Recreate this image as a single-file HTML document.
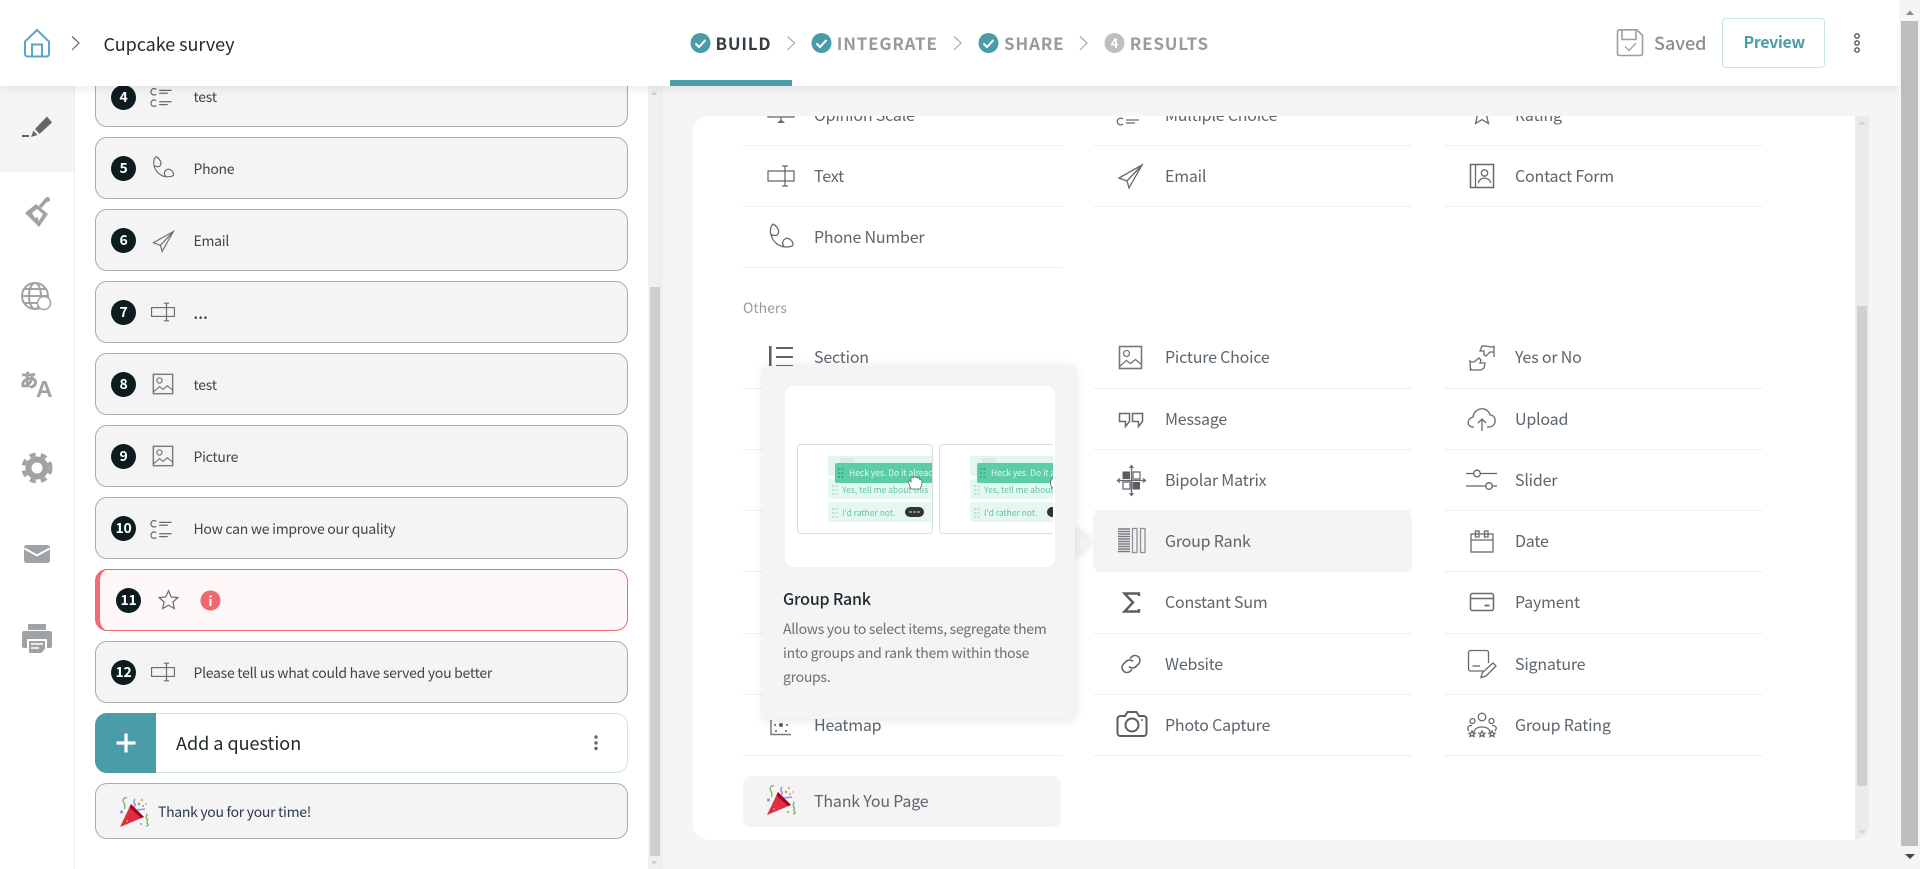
<!DOCTYPE html>
<html><head><meta charset="utf-8"><title>Cupcake survey</title>
<style>
*{box-sizing:border-box}
html,body{margin:0;padding:0;width:1920px;height:869px;overflow:hidden;background:#f5f5f5;font-family:"Noto Sans CJK JP","Liberation Sans",sans-serif}
.a{position:absolute}
.t{position:absolute;white-space:nowrap;line-height:20px;height:20px}
#hdr{left:0;top:0;width:1899px;height:86px;background:#fff;box-shadow:0 2px 10px rgba(0,0,0,.09);z-index:20}
#side{left:0;top:0;width:75px;height:869px;background:#fff;border-right:1px solid #eee;z-index:5}
#list{left:75px;top:0;width:573px;height:869px;background:#fff}
.card{position:absolute;left:95px;width:533px;height:62px;background:#f4f4f4;border:1px solid #a9acb1;border-radius:12px}
.b{position:absolute;width:25px;height:25px;border-radius:50%;background:#0d1c1f;color:#fff;font-size:14px;line-height:25px;text-align:center;font-weight:700;letter-spacing:-.3px}
.q{font-size:14px;color:#3f464c;left:193.5px;letter-spacing:-.27px}
.r{position:absolute;height:1px;width:319px;background:#f0f0f0}
.m{font-size:16px;color:#5d656d;letter-spacing:-.2px;margin-top:-1px}
.st{font-size:17px;font-weight:700;letter-spacing:.8px;color:#979b9e;top:33px}
#panel{left:693px;top:116px;width:1176px;height:724px;background:#fff;border-radius:16px 0 16px 16px;overflow:hidden}
#inner{position:absolute;left:-693px;top:-116px;width:1920px;height:869px}
svg{position:absolute;left:0;top:0;overflow:visible}
.i{fill:none;stroke:#666a6f;stroke-width:1.3}
.pv{font-family:"Noto Sans CJK JP",sans-serif;font-size:8.5px}
</style></head><body>

<svg width="0" height="0" style="position:absolute"><defs>
<g id="i-text" class="i"><rect x="-13" y="-5" width="26" height="10"/><path d="M4-10V10M1-10H7M1 10H7"/></g>
<g id="i-phone" class="i"><path d="M-8-13C-11-10-11-5-10-2C-8 5-2 10 5 10C9 10 12 9 12 8C12 3 7 0 4 2C1 4 1 7 3 9.500M-8-13C-4-11-1-6-3-3C-4-1-7-1-10-2.500"/></g>
<g id="i-mail" class="i"><path d="M12-11L-11 2L-3 5L-1 12ZM-3 5L12-11"/></g>
<g id="i-pic" class="i" style="stroke:#75797e"><rect x="-11" y="-11" width="22" height="22" stroke-width="1.6"/><circle cx="-4" cy="-4" r="3"/><path d="M-11 9L-4 3L0 6L5 2L11 7"/></g>
<g id="i-mc" class="i"><path d="M-7-8A3.4 3.4 0 1 0-7-3M-7 4A3.4 3.4 0 1 0-7 9M-4-7H9M-4-4H5M-4 5H9M-4 8H5"/></g>
<g id="i-star" class="i"><path d="M0-10L3-3.3L10.2-2.6L4.8 2.2L6.4 9.4L0 5.6L-6.4 9.4L-4.8 2.2L-10.2-2.6L-3-3.3Z"/></g>
<g id="party">
<path d="M1 30L12 7L25 20Z" fill="#dd2e44"/><path d="M12 7L25 20L22 21L10.500 10.500Z" fill="#a0041e"/><circle cx="8" cy="24" r="1" fill="#f4900c"/>
<path d="M5 6C3 3 5 0 8 1" fill="none" stroke="#77b255" stroke-width="1.3"/><path d="M5 6C6 8 6 10 5.5 12" fill="none" stroke="#77b255" stroke-width="1.3"/>
<path d="M15 2C17 3 13 5 16 7C17 8 15 9 16 10" fill="none" stroke="#aa8dd8" stroke-width="1.6"/><path d="M18 13L26 12" stroke="#aa8dd8" stroke-width="1.6"/>
<circle cx="2.5" cy="15" r="1.6" fill="#aa8dd8"/><circle cx="23" cy="3" r="1.3" fill="#f4b56a"/><circle cx="27" cy="7" r="1" fill="#f4b56a"/><circle cx="20" cy="7" r="1.2" fill="#77b255"/><circle cx="24" cy="9" r="1" fill="#aa8dd8"/>
<path d="M27 17C30 18 25 20 28 22C30 23 26 25 29 27C30 28 28 29 27 29" fill="none" stroke="#77b255" stroke-width="1.3"/><circle cx="22" cy="27" r="1" fill="#77b255"/>
</g>
<g id="grid"><rect x="0" y="0" width="2" height="2"/><rect x="3.500" y="0" width="2" height="2"/><rect x="0" y="4" width="2" height="2"/><rect x="3.500" y="4" width="2" height="2"/><rect x="0" y="8" width="2" height="2"/><rect x="3.500" y="8" width="2" height="2"/></g>
</defs></svg>

<!-- SIDEBAR -->
<div id="side" class="a">
<div class="a" style="left:0;top:86px;width:74px;height:86px;background:#f5f5f5"></div>
<svg width="75" height="869">
<path d="M47 116.5L52 122.5L39.5 134L35 129Z" fill="#63676c"/><path d="M33.500 130.500L37.500 135L31 137Z" fill="#63676c"/><rect x="22" y="135" width="7" height="2" fill="#63676c"/>
<path d="M25 213L36 204L48 214L39 227Z" fill="#a0a3a6"/><path d="M32 213L37 209L43 214L39 221L37.500 217L35 218Z" fill="#fff"/><path d="M40 207L47 199" stroke="#a0a3a6" stroke-width="3.500"/><circle cx="47.500" cy="199.500" r="2.500" fill="#a0a3a6"/>
<g fill="none" stroke="#a0a3a6" stroke-width="2"><circle cx="35" cy="296" r="13"/><ellipse cx="35" cy="296" rx="6" ry="13"/><path d="M22 296H48M24 289H46M24 303H46"/></g><circle cx="44" cy="303" r="6.500" fill="#fff" stroke="#a0a3a6" stroke-width="1.500"/>
<text x="20" y="387" font-size="18" font-weight="700" fill="#a0a3a6" stroke="#a0a3a6" stroke-width=".7" style="font-family:'Noto Sans CJK JP',sans-serif">あ</text>
<text x="36" y="397" font-size="23" font-weight="700" fill="#a0a3a6" style="font-family:'Liberation Sans',sans-serif">A</text>
<circle cx="37" cy="468" r="11.500" fill="#a0a3a6"/><circle cx="37" cy="468" r="13.500" fill="none" stroke="#a0a3a6" stroke-width="4" stroke-dasharray="6 5.200"/><circle cx="37" cy="468" r="5.500" fill="#fff"/>
<rect x="24" y="545" width="26" height="18" rx="2.500" fill="#a0a3a6"/><path d="M24.500 548.500L37 555.500L49.500 548.500" fill="none" stroke="#fff" stroke-width="2"/>
<rect x="28" y="624" width="18" height="6" fill="#a0a3a6"/><rect x="22" y="631" width="30" height="17" rx="2" fill="#a0a3a6"/><rect x="27" y="639" width="20" height="15" rx="1" fill="#fff"/><path d="M29 641H45V649L41 653H29Z" fill="#a0a3a6"/><path d="M31 644H43M31 648H39" stroke="#fff" stroke-width="1.500"/>
</svg>
</div>

<!-- LIST -->
<div id="list" class="a"></div>
<div class="card" style="top:65px"></div><div class="b" style="left:111px;top:84.500px">4</div><div class="t q" style="top:87px">test</div>
<div class="card" style="top:137px"></div><div class="b" style="left:111px;top:156px">5</div><div class="t q" style="top:159px">Phone</div>
<div class="card" style="top:209px"></div><div class="b" style="left:111px;top:228px">6</div><div class="t q" style="top:231px">Email</div>
<div class="card" style="top:281px"></div><div class="b" style="left:111px;top:300px">7</div><div class="t q" style="top:304px;font-weight:700;letter-spacing:.3px">...</div>
<div class="card" style="top:353px"></div><div class="b" style="left:111px;top:372px">8</div><div class="t q" style="top:375px">test</div>
<div class="card" style="top:425px"></div><div class="b" style="left:111px;top:444px">9</div><div class="t q" style="top:447px">Picture</div>
<div class="card" style="top:497px"></div><div class="b" style="left:111px;top:516px">10</div><div class="t q" style="top:519px">How can we improve our quality</div>
<div class="card" style="top:569px;background:#fdf7f7;border-color:#ec6a72;border-left:5px solid #ef6a73"></div><div class="b" style="left:116px;top:588px">11</div>
<div class="card" style="top:641px"></div><div class="b" style="left:111px;top:660px">12</div><div class="t q" style="top:663px">Please tell us what could have served you better</div>
<div class="a" style="left:95px;top:713px;width:533px;height:60px;background:#fff;border:1px solid #c9e3e6;border-radius:12px"></div>
<div class="a" style="left:95px;top:713px;width:61px;height:60px;background:#4a9ca8;border-radius:12px 0 0 12px"></div>
<div class="t" style="left:176px;top:732px;font-size:18px;color:#20282c;line-height:22px;height:22px">Add a question</div>
<div class="card" style="top:783px;height:56px"></div>
<div class="t" style="left:158px;top:802px;font-size:14px;color:#2b3a4a;letter-spacing:-.3px">Thank you for your time!</div>

<svg width="1920" height="869" style="z-index:2">
<use href="#i-mc" transform="translate(163 97) scale(.95)"/>
<use href="#i-phone" transform="translate(163 168) scale(.88)"/>
<use href="#i-mail" transform="translate(163 241) scale(.87)"/>
<use href="#i-text" transform="translate(163 312) scale(.88)"/>
<use href="#i-pic" transform="translate(163 384) scale(.88)"/>
<use href="#i-pic" transform="translate(163 456) scale(.88)"/>
<use href="#i-mc" transform="translate(163 529) scale(.95)"/>
<use href="#i-star" transform="translate(168.500 600) scale(.92)"/>
<circle cx="210.500" cy="600.500" r="10" fill="#f0676f"/><rect x="209.500" y="599" width="2" height="7" fill="#fff"/><rect x="209.500" y="595.500" width="2" height="2" fill="#fff"/>
<use href="#i-text" transform="translate(163 672) scale(.88)"/>
<path d="M126 733.500V752.500M116.500 743H135.500" stroke="#fff" stroke-width="3.200"/>
<circle cx="596" cy="737" r="1.700" fill="#666"/><circle cx="596" cy="743" r="1.700" fill="#666"/><circle cx="596" cy="748.500" r="1.700" fill="#666"/>
<use href="#party" transform="translate(119 797)"/>
</svg>

<!-- list scrollbar -->
<div class="a" style="left:648px;top:86px;width:12px;height:783px;background:#f0f0f0"></div>
<div class="a" style="left:650px;top:287px;width:10px;height:569px;background:#cfcfcf"></div>
<div class="a" style="left:660px;top:86px;width:3px;height:783px;background:#efefef"></div>
<svg width="1920" height="869" style="z-index:3"><path d="M651 95L654 91L657 95Z" fill="#d0d0d0"/><path d="M651 861L654 865L657 861Z" fill="#d0d0d0"/></svg>

<!-- MAIN PANEL -->
<div id="panel" class="a"><div id="inner">
<div class="r" style="left:743px;top:145px"></div><div class="r" style="left:1093px;top:145px"></div><div class="r" style="left:1444px;top:145px"></div>
<div class="r" style="left:743px;top:206px"></div><div class="r" style="left:1093px;top:206px"></div><div class="r" style="left:1444px;top:206px"></div>
<div class="r" style="left:743px;top:267px"></div>
<div class="r" style="left:743px;top:388px"></div><div class="r" style="left:1093px;top:388px"></div><div class="r" style="left:1444px;top:388px"></div>
<div class="r" style="left:743px;top:449px"></div><div class="r" style="left:1093px;top:449px"></div><div class="r" style="left:1444px;top:449px"></div>
<div class="r" style="left:743px;top:510px"></div><div class="r" style="left:1093px;top:510px"></div><div class="r" style="left:1444px;top:510px"></div>
<div class="r" style="left:743px;top:571px"></div><div class="r" style="left:1444px;top:571px"></div>
<div class="r" style="left:743px;top:633px"></div><div class="r" style="left:1093px;top:633px"></div><div class="r" style="left:1444px;top:633px"></div>
<div class="r" style="left:743px;top:694px"></div><div class="r" style="left:1093px;top:694px"></div><div class="r" style="left:1444px;top:694px"></div>
<div class="r" style="left:743px;top:755px"></div><div class="r" style="left:1093px;top:755px"></div><div class="r" style="left:1444px;top:755px"></div>
<div class="a" style="left:1093px;top:510px;width:319px;height:62px;background:#f4f4f4;border-radius:8px"></div>
<div class="a" style="left:743px;top:776px;width:318px;height:51px;background:#f4f4f4;border-radius:8px"></div>

<div class="t m" style="left:814px;top:105px">Opinion Scale</div><div class="t m" style="left:1165px;top:105px">Multiple Choice</div><div class="t m" style="left:1515px;top:105px">Rating</div>
<div class="t m" style="left:814px;top:166px">Text</div><div class="t m" style="left:1165px;top:166px">Email</div><div class="t m" style="left:1515px;top:166px">Contact Form</div>
<div class="t m" style="left:814px;top:227px">Phone Number</div>
<div class="t" style="left:743px;top:298px;font-size:14px;color:#9a9a9a">Others</div>
<div class="t m" style="left:814px;top:347px">Section</div><div class="t m" style="left:1165px;top:347px">Picture Choice</div><div class="t m" style="left:1515px;top:347px">Yes or No</div>
<div class="t m" style="left:1165px;top:409px">Message</div><div class="t m" style="left:1515px;top:409px">Upload</div>
<div class="t m" style="left:1165px;top:470px">Bipolar Matrix</div><div class="t m" style="left:1515px;top:470px">Slider</div>
<div class="t m" style="left:1165px;top:531px">Group Rank</div><div class="t m" style="left:1515px;top:531px">Date</div>
<div class="t m" style="left:1165px;top:592px">Constant Sum</div><div class="t m" style="left:1515px;top:592px">Payment</div>
<div class="t m" style="left:1165px;top:654px">Website</div><div class="t m" style="left:1515px;top:654px">Signature</div>
<div class="t m" style="left:814px;top:715px">Heatmap</div><div class="t m" style="left:1165px;top:715px">Photo Capture</div><div class="t m" style="left:1515px;top:715px">Group Rating</div>
<div class="t m" style="left:814px;top:791px">Thank You Page</div>

<svg width="1920" height="869">
<g class="i"><rect x="768" y="105" width="26" height="12"/><path d="M781 117V120"/></g><path d="M777 123L781 119.500L785 123Z" fill="#666a6f"/>
<use href="#i-mc" transform="translate(1130 115)"/>
<use href="#i-star" transform="translate(1482 114)"/>
<use href="#i-text" transform="translate(781 176)"/>
<use href="#i-mail" transform="translate(1130 176)"/>
<g class="i"><rect x="1470.500" y="164.500" width="23" height="23" stroke-width="1.500"/><path d="M1475.500 165V187"/><circle cx="1484.500" cy="173" r="3.200"/><path d="M1478.500 183C1479 176.500 1490 176.500 1490.500 183"/></g>
<use href="#i-phone" transform="translate(781 237)"/>

<rect x="769" y="346" width="2.500" height="21" fill="#5a5e63"/><path d="M776 348H793M776 357H793M776 366H793" stroke="#5f6368" stroke-width="2"/>
<use href="#i-pic" transform="translate(1130.500 357.500)"/>
<g class="i"><path d="M1119.500 413.500H1129.500V421.500L1125.500 426.500V421.500H1119.500ZM1132.500 413.500H1142.500V421.500L1138.500 426.500V421.500H1132.500Z" stroke-width="1.500"/></g>
<rect x="1122.500" y="471.500" width="7.500" height="7.500" fill="#5a5e63"/><rect x="1132.500" y="482" width="7.500" height="7.500" fill="#5a5e63"/>
<g class="i"><rect x="1133" y="472" width="7" height="7"/><rect x="1123" y="482" width="7" height="7"/><path d="M1131.500 466V495M1118 480.500H1145M1129.500 468L1131.500 465.500L1133.500 468M1129.500 493L1131.500 495.500L1133.500 493M1120 478.500L1117.500 480.500L1120 482.500M1143 478.500L1145.500 480.500L1143 482.500"/></g>
<path d="M1118 529H1130M1118 531.500H1130M1118 534H1130M1118 536.500H1130M1118 539H1130M1118 541.500H1130M1118 544H1130M1118 546.500H1130M1118 549H1130M1118 551.500H1130" stroke="#777b80" stroke-width="1.400"/>
<g class="i" style="stroke:#8d9196"><rect x="1132.500" y="528.500" width="4.500" height="24"/><rect x="1140.500" y="528.500" width="4.500" height="24"/></g>
<path d="M1139 596V593.500H1124.500L1133 602.500L1124.500 611.500H1139V609" fill="none" stroke="#5a5e63" stroke-width="2.400"/>
<g class="i" style="stroke-width:1.600"><g transform="translate(1131 664)"><path d="M-2 2.500A5 5 0 0 0 5 2.500L8 -.5A5 5 0 0 0 1 -7.500L-1 -5.500"/><path d="M2 -2.500A5 5 0 0 0 -5 -2.500L-8 .5A5 5 0 0 0 -1 7.500L1 5.500"/></g></g>
<g fill="none" stroke="#5a5e63" stroke-width="2"><path d="M1120.500 716H1125L1127.500 712H1136.500L1139 716H1143.500A3 3 0 0 1 1146.500 719V733A3 3 0 0 1 1143.500 736H1120.500A3 3 0 0 1 1117.500 733V719A3 3 0 0 1 1120.500 716Z"/><circle cx="1132" cy="725" r="6.500"/></g><circle cx="1142" cy="720" r="1" fill="#5a5e63"/>

<g class="i"><path d="M1470 360L1470.500 371M1470.500 362H1474L1479 358L1481 360L1480 363H1485L1484 368L1481 370H1473L1470.500 369"/><path d="M1494 345.500V357M1494 347H1491L1486 346H1482L1480 351H1484L1484 355L1486 356L1490 352H1494"/></g>
<g class="i"><path d="M1474 427H1473C1466 427 1467 418 1473 417C1474 408 1487 405 1490 415C1497 415 1497 427 1489 427H1487"/><path d="M1482 431V419M1478 423L1482 419L1486 423"/></g>
<g class="i" style="stroke:#5f6368"><path d="M1466 473.500H1473.500M1480.500 473.500H1497M1466 486H1485.500M1492.500 486H1497"/><circle cx="1477" cy="473.500" r="3.300"/><circle cx="1489" cy="486" r="3.300"/></g>
<g class="i"><rect x="1471" y="534" width="22" height="18"/><path d="M1471 540H1493"/><rect x="1475.500" y="531" width="3.500" height="6"/><rect x="1484.500" y="531" width="3.500" height="6"/></g>
<g class="i" style="stroke-width:1.500"><rect x="1470.500" y="593.500" width="23" height="17" rx="2"/><path d="M1470.500 598.500H1493.500"/><path d="M1484.500 605.500H1489.500" stroke-width="1.800"/></g>
<g class="i"><path d="M1483 671H1470.500A2 2 0 0 1 1468.500 669V652.500A2 2 0 0 1 1470.500 650.500H1486.500A2 2 0 0 1 1488.500 652.500V663"/><path d="M1472.500 666H1480"/><path d="M1493 663L1496 666L1486 676L1481 677.500L1482.500 672.500Z"/></g>
<g class="i"><circle cx="1482" cy="717" r="3.800"/><circle cx="1472.500" cy="721" r="2.500"/><circle cx="1491.500" cy="721" r="2.500"/><path d="M1474 733C1473 725 1491 725 1490 733M1469 731C1466 727 1469 725.500 1472 725.500M1495 731C1498 727 1495 725.500 1492 725.500"/>
<path d="M1472 731L1473 733L1475 733.300L1473.500 734.500L1474 736.500L1472 735.500L1470 736.500L1470.500 734.500L1469 733.300L1471 733ZM1482 731L1483 733L1485 733.300L1483.500 734.500L1484 736.500L1482 735.500L1480 736.500L1480.500 734.500L1479 733.300L1481 733ZM1492 731L1493 733L1495 733.300L1493.500 734.500L1494 736.500L1492 735.500L1490 736.500L1490.500 734.500L1489 733.300L1491 733Z"/></g>
<path d="M771 720V734.500H791" fill="none" stroke="#777b80" stroke-width="1.500"/><circle cx="781" cy="725" r="2" fill="#5a5e63"/><circle cx="775" cy="725" r="1" fill="#5a5e63"/><circle cx="787" cy="725" r="1" fill="#5a5e63"/><circle cx="776" cy="731" r="1" fill="#5a5e63"/><circle cx="786" cy="731" r="1" fill="#5a5e63"/>
<use href="#party" transform="translate(766 785)"/>
</svg>

<div class="a" style="left:1855px;top:116px;width:14px;height:724px;background:#ebebeb"></div>
<div class="a" style="left:1857px;top:306px;width:10px;height:480px;background:#d0d0d0"></div>
<svg width="1920" height="869"><path d="M1858 125L1862 121L1866 125Z" fill="#d6d6d6"/><path d="M1858 830L1862 834L1866 830Z" fill="#d6d6d6"/></svg>
</div></div>

<!-- POPOVER -->
<div class="a" style="left:1065px;top:532px;width:20px;height:20px;background:#f4f4f4;transform:rotate(45deg);box-shadow:2px -2px 8px rgba(0,0,0,.12);z-index:6"></div>
<div class="a" style="left:763px;top:366px;width:312px;height:353px;background:#f4f4f4;border-radius:4px;box-shadow:0 1px 10px rgba(0,0,0,.12);z-index:7">
<div class="a" style="left:22px;top:20px;width:270px;height:181px;background:#fff;border-radius:8px"></div>
</div>
<div class="a pv" style="left:785px;top:386px;width:268px;height:181px;overflow:hidden;z-index:8">
 <div class="a" style="left:12px;top:58px;width:136px;height:90px;background:#fff;border:1px solid #dcdcdc;border-radius:4px;overflow:hidden">
  <div class="a" style="left:30px;top:11px;width:110px;height:20px;background:#e3f5ef;border-radius:2px"></div>
  <div class="a" style="left:42px;top:13px;width:14px;height:6px;background:#d2efe5;border-radius:2px"></div>
  <div class="a" style="left:30px;top:34px;width:110px;height:20px;background:#e6f7f2;border-radius:2px"></div>
  <div class="t" style="left:44px;top:35px;color:#57c9a2">Yes, tell me about this</div>
  <div class="a" style="left:30px;top:57px;width:110px;height:20px;background:#e6f7f2;border-radius:2px"></div>
  <div class="t" style="left:44px;top:58px;color:#57c9a2">I'd rather not.</div>
  <div class="a" style="left:107px;top:62px;width:19px;height:10px;background:#333;border-radius:5px"></div>
  <div class="a" style="left:37px;top:18px;width:110px;height:20px;background:#5ccda6;border-radius:2px"></div>
  <div class="t" style="left:51px;top:18px;color:#e6f7f2">Heck yes. Do it already</div>
 </div>
 <div class="a" style="left:154px;top:58px;width:136px;height:90px;background:#fff;border:1px solid #dcdcdc;border-radius:4px;overflow:hidden">
  <div class="a" style="left:30px;top:11px;width:110px;height:20px;background:#e3f5ef;border-radius:2px"></div>
  <div class="a" style="left:42px;top:13px;width:14px;height:6px;background:#d2efe5;border-radius:2px"></div>
  <div class="a" style="left:30px;top:34px;width:110px;height:20px;background:#e6f7f2;border-radius:2px"></div>
  <div class="t" style="left:44px;top:35px;color:#57c9a2">Yes, tell me about this</div>
  <div class="a" style="left:30px;top:57px;width:110px;height:20px;background:#e6f7f2;border-radius:2px"></div>
  <div class="t" style="left:44px;top:58px;color:#57c9a2">I'd rather not.</div>
  <div class="a" style="left:107px;top:62px;width:19px;height:10px;background:#333;border-radius:5px"></div>
  <div class="a" style="left:37px;top:18px;width:110px;height:20px;background:#5ccda6;border-radius:2px"></div>
  <div class="t" style="left:51px;top:18px;color:#e6f7f2">Heck yes. Do it already</div>
 </div>
 <svg width="268" height="181">
  <use href="#grid" fill="#3fae88" x="53" y="82"/><use href="#grid" fill="#3fae88" x="195" y="82"/>
  <use href="#grid" fill="#b5e6d5" x="47" y="99"/><use href="#grid" fill="#b5e6d5" x="47" y="122"/>
  <use href="#grid" fill="#b5e6d5" x="189" y="99"/><use href="#grid" fill="#b5e6d5" x="189" y="122"/>
  <path d="M124 126H127M128 126H131M132 126H135" stroke="#888" stroke-width="2"/>
  <path d="M126 103C125 99 123 97 123 95.500C123 94.500 125 94.500 126 96L126 92C126 90.500 128 90.500 128.500 92L129 91C129.500 90 131 90 131.500 91.500L132 92C133 91 134.500 92 134.500 93L135 93.500C136.500 93.500 137 94.500 137 96C137 99 136 101 135 103Z" fill="#fff" stroke="#555" stroke-width=".7"/>
  <circle cx="272" cy="97" r="6.500" fill="#fff" stroke="#555" stroke-width=".7"/>
 </svg>
</div>
<div class="t" style="left:783px;top:588px;font-size:16px;font-weight:500;color:#1e2a30;z-index:9;letter-spacing:-.2px">Group Rank</div>
<div class="a" style="left:783px;top:617px;width:290px;white-space:nowrap;font-size:14px;line-height:24px;color:#6a7075;z-index:9;letter-spacing:-.28px">Allows you to select items, segregate them<br>into groups and rank them within those<br>groups.</div>

<!-- HEADER -->
<div id="hdr" class="a">
<svg width="1899" height="86">
<path d="M37 30L25 41.500V54A2.500 2.500 0 0 0 27.500 56.500H46.500A2.500 2.500 0 0 0 49 54V41.500Z" fill="none" stroke="#5aa5c8" stroke-width="2"/><path d="M32 56V44.500H42V56" fill="none" stroke="#5aa5c8" stroke-width="2"/>
<path d="M72 36.500L79 43L72 50" fill="none" stroke="#666" stroke-width="1.200"/>
<circle cx="700.500" cy="43" r="10" fill="#4a9ca8"/><path d="M695.500 43.500L699 47L705.500 40" fill="none" stroke="#fff" stroke-width="2"/>
<path d="M787.500 36.500L794.500 43L787.500 50" fill="none" stroke="#aaa" stroke-width="1.200"/>
<circle cx="821.500" cy="43" r="10" fill="#4a9ca8"/><path d="M816.500 43.500L820 47L826.500 40" fill="none" stroke="#fff" stroke-width="2"/>
<path d="M954 36.500L961 43L954 50" fill="none" stroke="#aaa" stroke-width="1.200"/>
<circle cx="988.500" cy="43" r="10" fill="#4a9ca8"/><path d="M983.500 43.500L987 47L993.500 40" fill="none" stroke="#fff" stroke-width="2"/>
<path d="M1080 36.500L1087 43L1080 50" fill="none" stroke="#aaa" stroke-width="1.200"/>
<circle cx="1114.500" cy="43" r="10" fill="#bdbfc1"/><text x="1114.500" y="48" text-anchor="middle" font-size="13" font-weight="700" fill="#fff" style="font-family:'Noto Sans CJK JP',sans-serif">4</text>
<g fill="none" stroke="#9a9ea2" stroke-width="1.600"><path d="M1619 29.800H1637L1642.500 35.500V53.500A2 2 0 0 1 1640.500 55.500H1619A2 2 0 0 1 1617.500 53.500V31.500A2 2 0 0 1 1619 29.800Z"/><path d="M1622 30V39.500H1636V30"/><path d="M1625 46.500L1629 50.500L1636 43" stroke-width="1.300"/></g>
<g fill="none" stroke="#555" stroke-width="1.400"><circle cx="1857" cy="36" r="2.200"/><circle cx="1857" cy="43" r="2.200"/><circle cx="1857" cy="50" r="2.200"/></g>
</svg>
<div class="t" style="left:103.500px;top:33px;font-size:18px;line-height:22px;height:22px;color:#1f2a30;letter-spacing:-.05px">Cupcake survey</div>
<div class="t st" style="left:715.500px;color:#333e44">BUILD</div>
<div class="t st" style="left:836.800px">INTEGRATE</div>
<div class="t st" style="left:1004px">SHARE</div>
<div class="t st" style="left:1129.700px">RESULTS</div>
<div class="a" style="left:670px;top:80px;width:122px;height:6px;background:#4a9ca8"></div>
<div class="t" style="left:1654px;top:33px;font-size:18px;font-weight:500;color:#8a8f94">Saved</div>
<div class="a" style="left:1722px;top:18px;width:103px;height:50px;background:#fff;border:1px solid #c9e3e6;border-radius:4px"></div>
<div class="t" style="left:1743.500px;top:31px;font-size:16px;font-weight:700;color:#4a9ca8;letter-spacing:-.35px">Preview</div>
</div>

<!-- PAGE SCROLLBAR -->
<div class="a" style="left:1899px;top:0;width:21px;height:869px;background:#f5f5f5;z-index:21"></div>
<div class="a" style="left:1901px;top:21px;width:17px;height:825px;background:#bdbdbd;z-index:22"></div>
<svg width="1920" height="869" style="z-index:23"><path d="M1906 15L1910 10.500L1914 15Z" fill="#8a8a8a"/><path d="M1905 854L1910 859L1915 854Z" fill="#444"/></svg>
</body></html>
